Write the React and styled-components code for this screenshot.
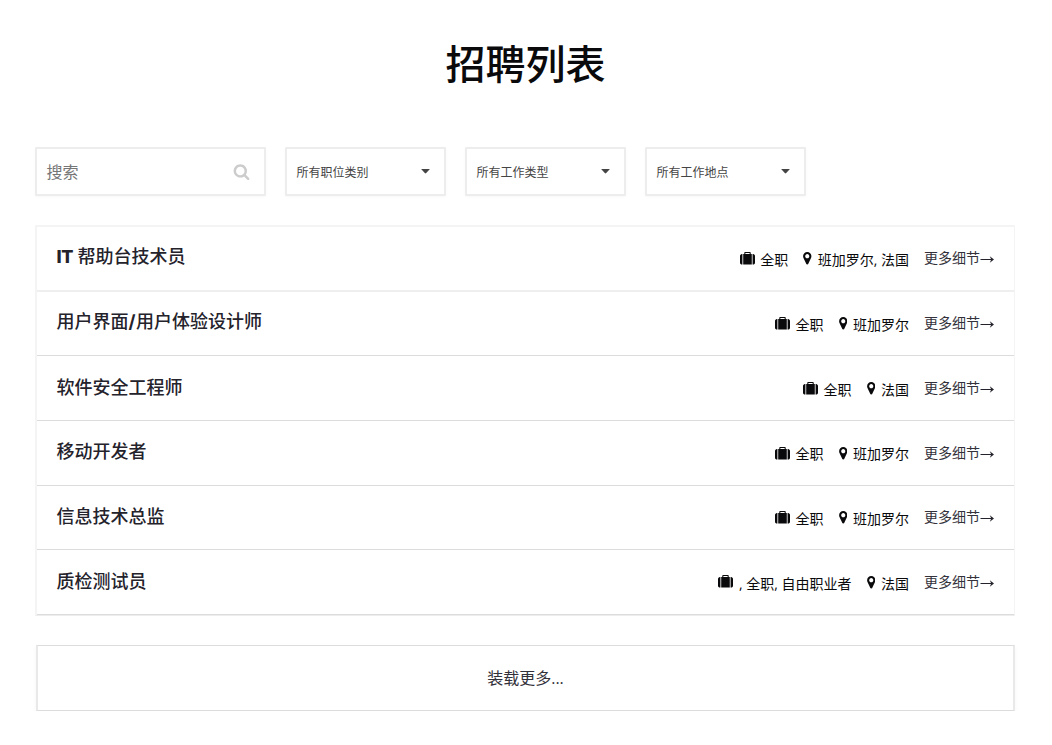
import React from 'react';
import styled, { createGlobalStyle } from 'styled-components';

const GlobalStyle = createGlobalStyle`
  * {
    box-sizing: border-box;
  }

  body {
    margin: 0;
    background: #fff;
    color: #0a0a0c;
    font-family: 'Open Sans', 'Noto Sans CJK SC', sans-serif;
  }
`;

const Page = styled.main`
  width: 980px;
  margin-left: 35px;
  padding-top: 32px;
`;

const Title = styled.h1`
  margin: 0;
  height: 60px;
  line-height: 60px;
  padding-left: 1px;
  font-family: 'Noto Sans CJK SC', sans-serif;
  font-size: 40px;
  font-weight: 500;
  text-align: center;
  color: #0a0a0c;
`;

const Filters = styled.div`
  display: flex;
  gap: 19px;
  margin-top: 55px;
`;

const Field = styled.div`
  display: flex;
  align-items: center;
  justify-content: space-between;
  width: ${(props) => props.$width};
  height: 49px;
  padding: 0 14px 0 9.5px;
  border: 2px solid #ededee;
  border-radius: 1px;
  box-shadow: 0 1px 3px rgba(0, 0, 0, 0.03);
`;

const Placeholder = styled.span`
  padding-bottom: 2px;
  font-size: 16px;
  color: #757575;
`;

const Selected = styled.span`
  font-size: 12px;
  color: #444;
`;

const List = styled.section`
  display: grid;
  grid-template-rows: repeat(6, 1fr);
  height: 391px;
  margin-top: 29px;
  border: 2px solid #f4f4f5;
  border-right-width: 1px;
  border-bottom: 1px solid #ededee;
`;

const Row = styled.article`
  display: flex;
  align-items: center;
  justify-content: space-between;
  padding: 0 20px 0 19.5px;
  border-bottom: ${(props) => (props.$soft ? '2px solid #efeff0' : '1px solid #dcdcde')};
`;

const JobTitle = styled.h2`
  margin: 0 0 3px;
  font-size: 18px;
  font-weight: 500;
  line-height: 26px;
  color: #24222b;
`;

const Latin = styled.span`
  font-family: Inter, sans-serif;
  font-weight: ${(props) => (props.$heavy ? 800 : 700)};
  letter-spacing: ${(props) => (props.$heavy ? '-0.5px' : '0.5px')};
`;

const Details = styled.div`
  display: flex;
  align-items: center;
  font-size: 14px;
  line-height: 20px;
  white-space: pre;
`;

const Meta = styled.span`
  display: flex;
  align-items: center;
  gap: ${(props) => props.$gap};
  margin-right: 15px;
  padding-top: 3px;
`;

const More = styled.a`
  display: flex;
  color: #33313a;
`;

const LoadMore = styled.div`
  display: flex;
  align-items: center;
  justify-content: center;
  height: 66px;
  margin: 29px 0 0 1px;
  padding-bottom: 3px;
  border: 1px solid #dcdcde;
  border-left: 2px solid #e9e9ea;
  border-right: 2px solid #e9e9ea;
  box-shadow: 0 2px 5px rgba(0, 0, 0, 0.04);
  font-size: 16px;
  color: #33313a;
`;

const Icon = styled.svg`
  display: block;
  flex: none;
  fill: ${(props) => props.$color || '#0a0a0c'};
  margin-bottom: ${(props) => props.$lift || 0};
`;

const SearchIcon = () => (
  <Icon width="17" height="17" viewBox="0 0 1792 1792" $color="#ccc">
    <path d="M1216 832q0-185-131.500-316.500t-316.500-131.500-316.500 131.500-131.500 316.500 131.500 316.500 316.500 131.500 316.500-131.500 131.500-316.500zm512 832q0 52-38 90t-90 38q-54 0-90-38l-343-342q-179 124-399 124-143 0-273.500-55.500t-225-150-150-225-55.500-273.500 55.500-273.500 150-225 225-150 273.500-55.500 273.500 55.500 225 150 150 225 55.500 273.500q0 220-124 399l343 343q37 37 37 90z" />
  </Icon>
);

const CaretIcon = () => (
  <Icon width="9" height="5" viewBox="0.5 0 9 5" $color="#444" $lift="1px">
    <path d="M1.300 0h7.400q.7 0 .3.500l-3.300 3.600q-.7.700-1.400 0l-3.300-3.600q-.4-.5.3-.5z" />
  </Icon>
);

const SuitcaseIcon = ({ lift }) => (
  <Icon width="15" height="14.500" viewBox="0 0 1792 1792" preserveAspectRatio="none" $lift={lift}>
    <path d="M640 384h512v-128h-512v128zm-352 0v1280h-64q-92 0-158-66t-66-158v-832q0-92 66-158t158-66h64zm1120 0v1280h-1024v-1280h128v-160q0-40 28-68t68-28h576q40 0 68 28t28 68v160h128zm384 224v832q0 92-66 158t-158 66h-64v-1280h64q92 0 158 66t66 158z" />
  </Icon>
);

const MarkerIcon = () => (
  <Icon width="8.500" height="14.500" viewBox="384 0 1024 1792" $lift="3px">
    <path d="M1152 640q0-106-75-181t-181-75-181 75-75 181 75 181 181 75 181-75 75-181zm256 0q0 109-33 179l-364 774q-16 33-47.500 52t-67.500 19-67.500-19-46.500-52l-365-774q-33-70-33-179 0-212 150-362t362-150 362 150 150 362z" />
  </Icon>
);

const Arrow = () => (
  <Icon width="14" height="20" viewBox="0 0 14 20" $color="#24222b">
    <path d="M.5 10.900h10.500l-1.200-2.700 4.200 3.300-4.200 3.300 1.200-2.700h-10.500z" />
  </Icon>
);

const filters = ['所有职位类别', '所有工作类型', '所有工作地点'];

const jobs = [
  { title: 'IT 帮助台技术员', type: '全职', place: '班加罗尔, 法国' },
  { title: '用户界面/用户体验设计师', type: '全职', place: '班加罗尔' },
  { title: '软件安全工程师', type: '全职', place: '法国' },
  { title: '移动开发者', type: '全职', place: '班加罗尔' },
  { title: '信息技术总监', type: '全职', place: '班加罗尔' },
  { title: '质检测试员', type: ', 全职, 自由职业者', place: '法国', lift: '5px' },
];

// Latin runs are set heavier than the Chinese around them
const renderTitle = (title) =>
  title.split(/(IT|\/)/).map((part, i) =>
    i % 2 ? (
      <Latin key={i} $heavy={part === 'IT'}>
        {part}
      </Latin>
    ) : (
      part
    )
  );

export default function App() {
  return (
    <Page>
      <GlobalStyle />
      <Title>招聘列表</Title>
      <Filters>
        <Field $width="231px">
          <Placeholder>搜索</Placeholder>
          <SearchIcon />
        </Field>
        {filters.map((label) => (
          <Field key={label} $width="161px">
            <Selected>{label}</Selected>
            <CaretIcon />
          </Field>
        ))}
      </Filters>
      <List>
        {jobs.map((job, i) => (
          <Row key={job.title} $soft={i === 0}>
            <JobTitle>{renderTitle(job.title)}</JobTitle>
            <Details>
              <Meta $gap="5.5px">
                <SuitcaseIcon lift={job.lift || '3px'} />
                {job.type}
              </Meta>
              <Meta $gap="6px">
                <MarkerIcon />
                {job.place}
              </Meta>
              <More>
                更多细节
                <Arrow />
              </More>
            </Details>
          </Row>
        ))}
      </List>
      <LoadMore>装载更多...</LoadMore>
    </Page>
  );
}
